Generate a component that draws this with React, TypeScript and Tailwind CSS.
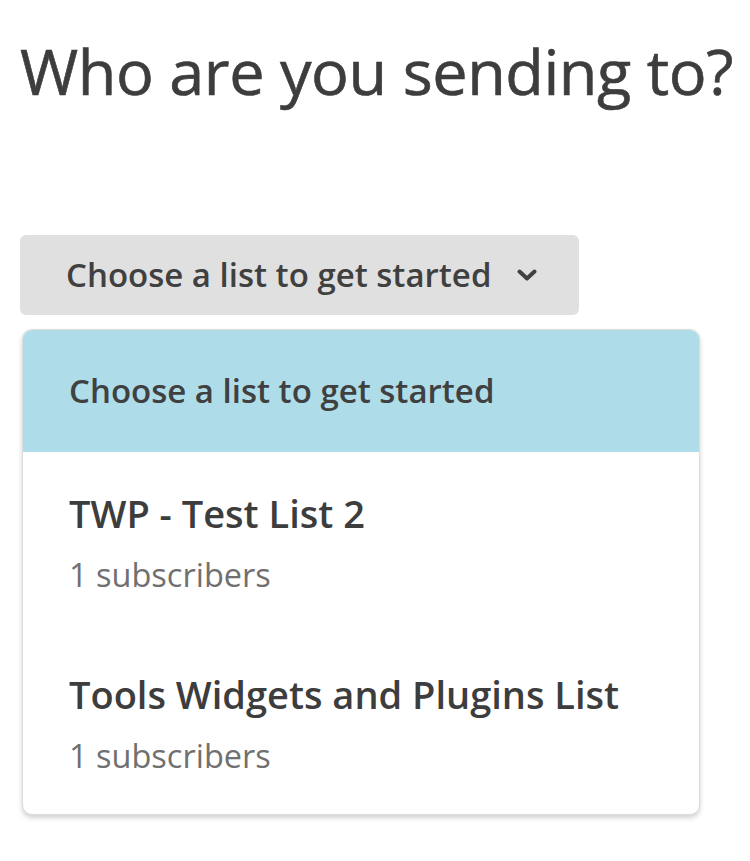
import React from 'react';

const lists = [
  { name: 'TWP - Test List 2', count: 1 },
  { name: 'Tools Widgets and Plugins List', count: 1 },
];

function Chevron() {
  return (
    <svg viewBox="0 0 20 12" className="w-[20px] h-[12px]" fill="none">
      <polyline points="2.5,2.5 10,9.5 17.5,2.5" stroke="#404040" strokeWidth="4" strokeLinecap="round" strokeLinejoin="round" />
    </svg>
  );
}

export default function App() {
  return (
    <div className="min-h-screen bg-white font-['Open_Sans',sans-serif] text-[#3d3d3d]">
      <div className="px-[20px] pt-[39px]">
        <h1 className="text-[63px] leading-none font-normal tracking-[-0.45px] whitespace-nowrap [-webkit-text-stroke:0.6px_#3d3d3d]">
          Who are you sending to?
        </h1>

        <button className="mt-[133px] w-[559px] h-[80px] rounded-[6px] bg-[#e0e0e0] flex items-center pl-[46px] gap-[26px] text-[33px] font-semibold text-[#404040]">
          <span>Choose a list to get started</span>
          <Chevron />
        </button>

        <div className="mt-[14px] ml-[2px] w-[678px] rounded-[10px] border border-[#dcdcdc] bg-white shadow-[0_3px_5px_rgba(0,0,0,0.18)] overflow-hidden">
          <div className="h-[122px] bg-[#aedce9] flex items-center pl-[46px] text-[33px] font-semibold text-[#404040]">
            Choose a list to get started
          </div>
          {lists.map((l) => (
            <div key={l.name} className="h-[181px] pl-[46px] pt-[39px]">
              <div className="text-[38px] leading-[1.2] font-semibold text-[#3d3d3d]">{l.name}</div>
              <div className="mt-[17px] text-[32.5px] leading-[1.3] text-[#707070]">{l.count} subscribers</div>
            </div>
          ))}
        </div>
      </div>
    </div>
  );
}
